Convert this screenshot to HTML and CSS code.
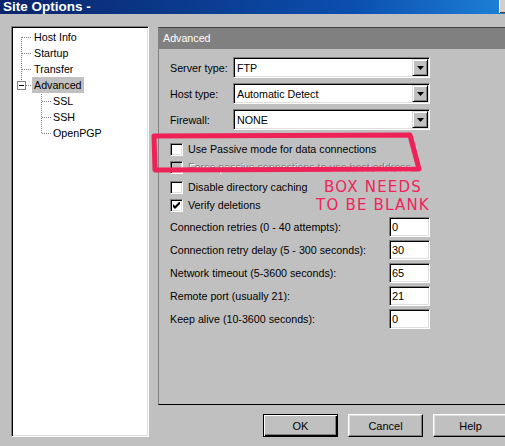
FILE: index.html
```html
<!DOCTYPE html>
<html>
<head>
<meta charset="utf-8">
<link rel="stylesheet" href="styles.css">
</head>
<body>
<div class="titlebar"><span class="title">Site Options -</span><span class="tb-btn"></span></div>
<div class="main">
  <div class="tree">
    <svg class="tree-lines" width="134" height="120" viewBox="0 0 134 120">
      <g stroke="#808080" stroke-width="1" stroke-dasharray="1 1" fill="none" shape-rendering="crispEdges">
        <line x1="8.5" y1="9" x2="8.5" y2="52"/>
        <line x1="9" y1="9.5" x2="19" y2="9.5"/>
        <line x1="9" y1="25.5" x2="19" y2="25.5"/>
        <line x1="9" y1="41.5" x2="19" y2="41.5"/>
        <line x1="13" y1="57.5" x2="19" y2="57.5"/>
        <line x1="28.5" y1="62" x2="28.5" y2="106"/>
        <line x1="29" y1="73.5" x2="38" y2="73.5"/>
        <line x1="29" y1="89.5" x2="38" y2="89.5"/>
        <line x1="29" y1="105.5" x2="38" y2="105.5"/>
      </g>
      <rect x="4.5" y="53.5" width="8" height="8" fill="#fff" stroke="#808080" shape-rendering="crispEdges"/>
      <line x1="6" y1="57.5" x2="11" y2="57.5" stroke="#000" shape-rendering="crispEdges"/>
    </svg>
    <div class="row"><span>Host Info</span></div>
    <div class="row"><span>Startup</span></div>
    <div class="row"><span>Transfer</span></div>
    <div class="row sel"><span>Advanced</span></div>
    <div class="row l1"><span>SSL</span></div>
    <div class="row l1"><span>SSH</span></div>
    <div class="row l1"><span>OpenPGP</span></div>
  </div>
  <div class="right">
    <div class="panel">
      <div class="panel-head">Advanced</div>
      <div class="panel-body">
        <div class="selects">
          <div class="srow"><span class="lbl">Server type:</span><div class="select"><span>FTP</span><span class="drop"><svg width="7" height="4" viewBox="0 0 7 4"><polygon points="0,0 7,0 3.5,4" fill="#000"/></svg></span></div></div>
          <div class="srow"><span class="lbl">Host type:</span><div class="select"><span>Automatic Detect</span><span class="drop"><svg width="7" height="4" viewBox="0 0 7 4"><polygon points="0,0 7,0 3.5,4" fill="#000"/></svg></span></div></div>
          <div class="srow"><span class="lbl">Firewall:</span><div class="select"><span>NONE</span><span class="drop"><svg width="7" height="4" viewBox="0 0 7 4"><polygon points="0,0 7,0 3.5,4" fill="#000"/></svg></span></div></div>
        </div>
        <div class="checks">
          <div class="cgroup">
            <div class="crow"><span class="cb"></span><span>Use Passive mode for data connections</span></div>
            <div class="crow dis"><span class="cb"></span><span>Force passive connections to use host address</span></div>
          </div>
          <div class="cgroup">
            <div class="crow"><span class="cb"></span><span>Disable directory caching</span></div>
            <div class="crow"><span class="cb"><svg width="7" height="7" viewBox="0 0 7 7"><polygon points="0,2 2,4 7,-1 7,2 2,7 0,5" fill="#000"/></svg></span><span>Verify deletions</span></div>
          </div>
        </div>
        <div class="nums">
          <div class="nrow"><span>Connection retries (0 - 40 attempts):</span><span class="inp">0</span></div>
          <div class="nrow"><span>Connection retry delay (5 - 300 seconds):</span><span class="inp">30</span></div>
          <div class="nrow"><span>Network timeout (5-3600 seconds):</span><span class="inp">65</span></div>
          <div class="nrow"><span>Remote port (usually 21):</span><span class="inp">21</span></div>
          <div class="nrow"><span>Keep alive (10-3600 seconds):</span><span class="inp">0</span></div>
        </div>
      </div>
    </div>
    <div class="buttons">
      <span class="btn default">OK</span>
      <span class="btn">Cancel</span>
      <span class="btn">Help</span>
    </div>
  </div>
</div>
<svg class="annot" width="505" height="446" viewBox="0 0 505 446">
  <path d="M154 136 L410 135 L419 169 L155 170 Z" fill="none" stroke="#ee2257" stroke-width="5" stroke-linejoin="round"/>
</svg>
<div class="note"><div>BOX NEEDS</div><div>TO BE BLANK</div></div>
</body>
</html>
```
FILE: styles.css
```css
body {
  margin: 0;
  width: 505px;
  height: 446px;
  overflow: hidden;
  background: #c0c0c0;
  font-family: "Liberation Sans", Arial, sans-serif;
  font-size: 10.7px;
  color: #000;
  position: relative;
}
.titlebar {
  height: 14px;
  background: linear-gradient(to right, #0a246a 0%, #0b4fae 70%, #1d80d6 100%);
  display: flex;
  align-items: center;
  justify-content: space-between;
}
.title {
  color: #fff;
  font-weight: bold;
  font-size: 13.5px;
  line-height: 14px;
  padding-left: 3px;
}
.tb-btn {
  width: 5px;
  height: 13px;
  align-self: flex-start;
  background: #d4d0c8;
  border-left: 1px solid #fff;
  box-shadow: inset 0 -1px #404040;
}
.main {
  display: flex;
  gap: 9px;
  padding: 12px 0 0 11px;
}
.tree {
  position: relative;
  flex: none;
  width: 138px;
  height: 411px;
  box-sizing: border-box;
  background: #fff;
  border: 1px solid;
  border-color: #808080 #fff #fff #808080;
  box-shadow: inset 1px 1px #000, inset -1px -1px #dfdfdf;
  padding: 2px 1px 1px 1px;
}
.tree-lines {
  position: absolute;
  top: 1px;
  left: 1px;
}
.row {
  position: relative;
  height: 16px;
  line-height: 16px;
  padding-left: 19px;
}
.row span {
  padding: 0 2px;
  display: inline-block;
}
.row.l1 { padding-left: 38px; }
.row.sel span { background: #c0c0c0; }
.right {
  flex: none;
  width: 360px;
  display: flex;
  flex-direction: column;
  margin-top: 1px;
}
.panel {
  height: 378px;
  box-sizing: border-box;
  border-top: 1px solid #404040;
  border-left: 1px solid #808080;
  border-bottom: 1px solid #000;
}
.panel-head {
  height: 21px;
  line-height: 21px;
  background: #808080;
  color: #fff;
  padding-left: 4px;
}
.panel-body {
  padding: 8px 0 0 11px;
}
.selects {
  display: flex;
  flex-direction: column;
  gap: 5px;
}
.srow {
  display: flex;
  align-items: center;
  height: 21px;
}
.lbl { width: 63px; flex: none; }
.select {
  width: 197px;
  height: 21px;
  box-sizing: border-box;
  background: #fff;
  border: 1px solid;
  border-color: #808080 #fff #fff #808080;
  box-shadow: inset 1px 1px #000, inset -1px -1px #dfdfdf;
  display: flex;
  align-items: center;
  justify-content: space-between;
  padding-left: 3px;
}
.drop {
  width: 16px;
  height: 17px;
  margin-right: 1px;
  box-sizing: border-box;
  background: #c0c0c0;
  border: 1px solid;
  border-color: #dfdfdf #000 #000 #dfdfdf;
  box-shadow: inset 1px 1px #fff, inset -1px -1px #808080;
  display: flex;
  align-items: center;
  justify-content: center;
}
.checks { margin-top: 10px; }
.cgroup + .cgroup { margin-top: 2px; }
.crow {
  height: 18px;
  display: flex;
  align-items: center;
  gap: 5px;
}
.cb {
  flex: none;
  width: 13px;
  height: 13px;
  box-sizing: border-box;
  background: #fff;
  border: 1px solid;
  border-color: #808080 #fff #fff #808080;
  box-shadow: inset 1px 1px #000, inset -1px -1px #dfdfdf;
  display: flex;
  align-items: center;
  justify-content: center;
}
.crow.dis .cb { background: #c0c0c0; }
.crow.dis span + span {
  color: #808080;
  text-shadow: 1px 1px #fff;
}
.nums {
  margin-top: 3px;
  display: flex;
  flex-direction: column;
  gap: 3px;
}
.nrow {
  display: grid;
  grid-template-columns: 219px 41px;
  align-items: center;
  height: 20px;
}
.inp {
  height: 20px;
  line-height: 18px;
  box-sizing: border-box;
  background: #fff;
  border: 1px solid;
  border-color: #808080 #fff #fff #808080;
  box-shadow: inset 1px 1px #000, inset -1px -1px #dfdfdf;
  padding-left: 2px;
  font-size: 11px;
}
.buttons {
  display: flex;
  gap: 10px;
  padding-left: 105px;
  margin-top: 9px;
}
.btn {
  flex: none;
  width: 75px;
  height: 23px;
  box-sizing: border-box;
  background: #c0c0c0;
  border: 1px solid;
  border-color: #fff #000 #000 #fff;
  box-shadow: inset -1px -1px #808080, inset 1px 1px #dfdfdf;
  display: flex;
  align-items: center;
  justify-content: center;
  font-size: 11px;
}
.btn.default {
  border: 1px solid #000;
  box-shadow: inset 1px 1px #fff, inset -1px -1px #000, inset -2px -2px #808080;
}
.annot {
  position: absolute;
  top: 0;
  left: 0;
  pointer-events: none;
}
.note {
  position: absolute;
  left: 306px;
  top: 179px;
  width: 134px;
  text-align: center;
  color: #f0245c;
  font-family: "DejaVu Sans", sans-serif;
  font-size: 15px;
  line-height: 17.5px;
  letter-spacing: 1.2px;
}
```
